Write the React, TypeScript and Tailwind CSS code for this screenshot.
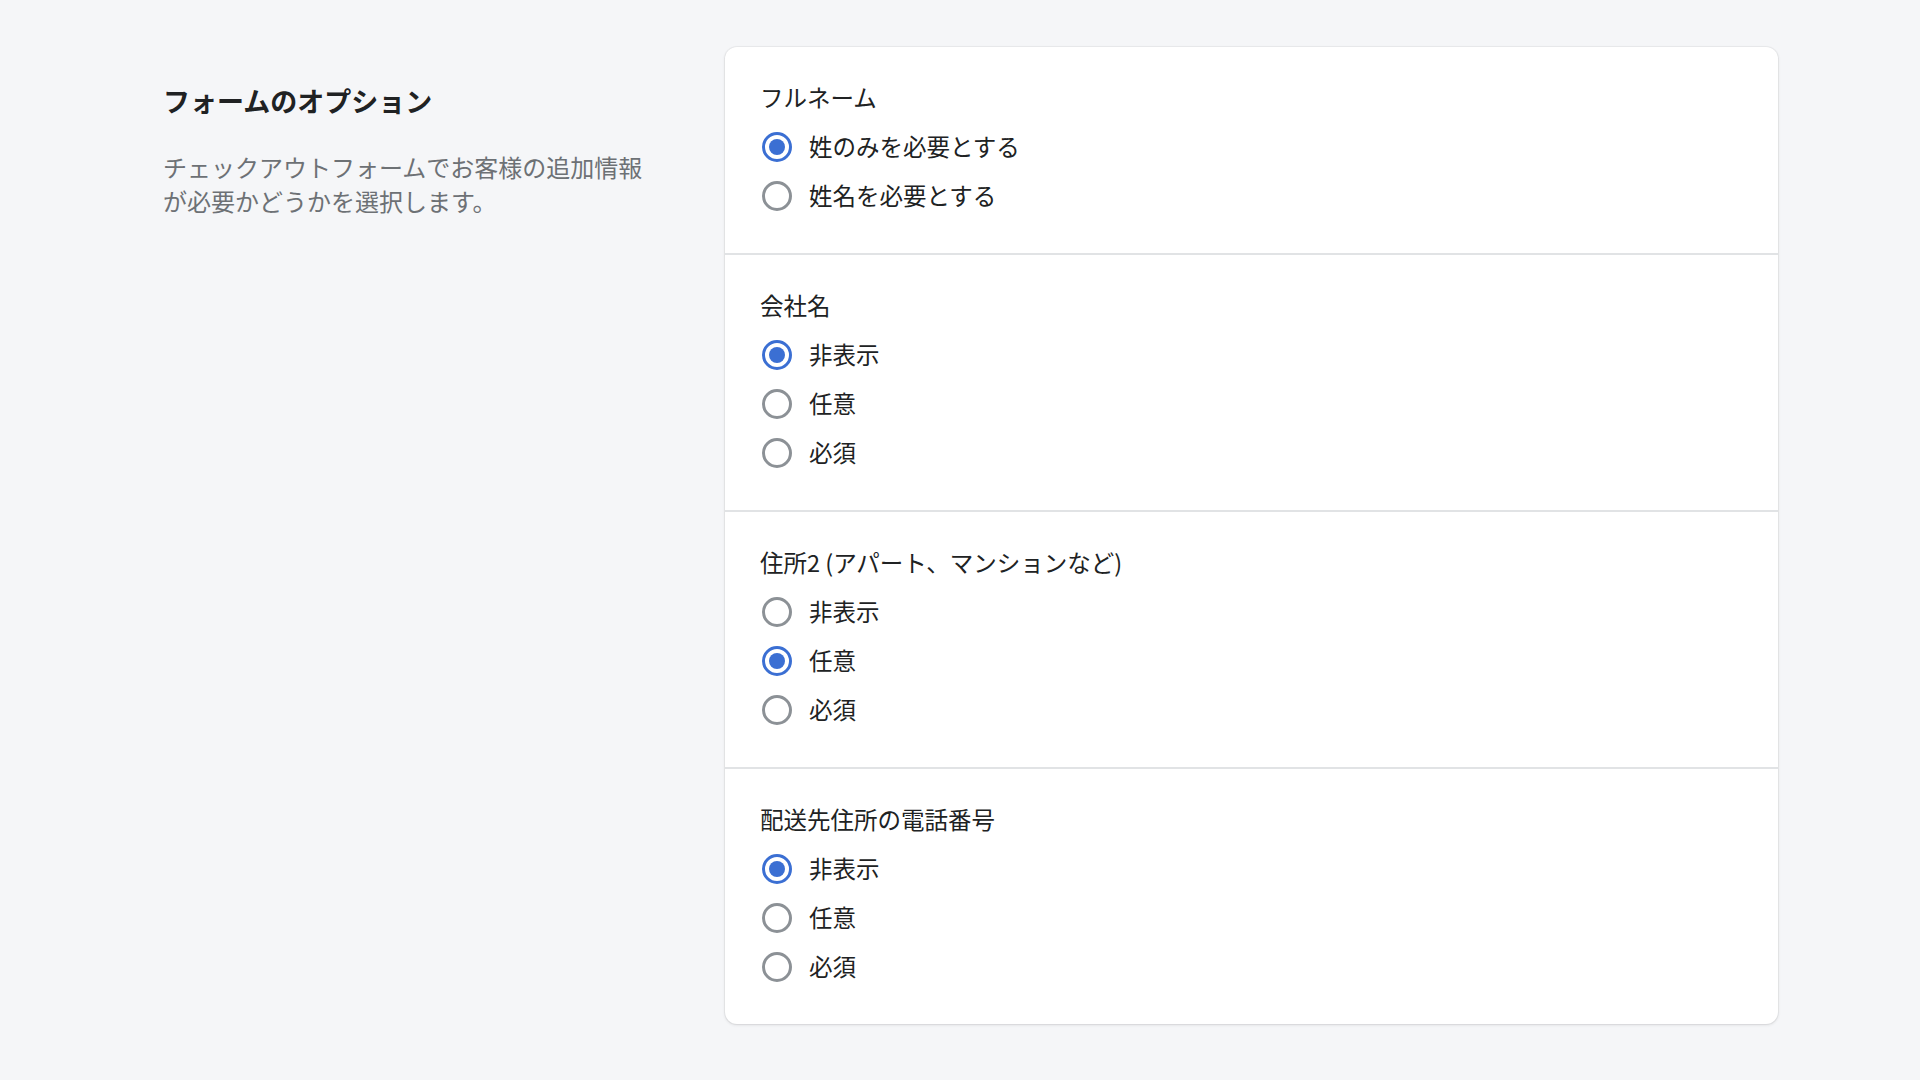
const SECTIONS: { label: string; options: string[]; selected: number }[] = [
  { label: 'フルネーム', options: ['姓のみを必要とする', '姓名を必要とする'], selected: 0 },
  { label: '会社名', options: ['非表示', '任意', '必須'], selected: 0 },
  { label: '住所2 (アパート、マンションなど)', options: ['非表示', '任意', '必須'], selected: 1 },
  { label: '配送先住所の電話番号', options: ['非表示', '任意', '必須'], selected: 0 },
];

function Radio({ checked }: { checked: boolean }) {
  return checked ? (
    <span className="flex h-[30px] w-[30px] items-center justify-center rounded-full border-[3px] border-[#3b6fd3]">
      <span className="h-[16px] w-[16px] rounded-full bg-[#3b6fd3]" />
    </span>
  ) : (
    <span className="h-[30px] w-[30px] rounded-full border-[3px] border-[#8c9196]" />
  );
}

export default function App() {
  return (
    <div
      className="min-h-screen bg-[#f5f6f8] text-[#202223]"
      style={{ fontFamily: '"Noto Sans CJK JP", "Noto Sans", sans-serif' }}
    >
      <div className="flex pt-[47px]">
        <div className="ml-[163px] w-[500px] pt-[34px]">
          <h2 className="text-[27px] font-bold leading-[40px]">フォームのオプション</h2>
          <p className="mt-[29px] w-[495px] text-[24px] leading-[34px] text-[#6d7175]">
            チェックアウトフォームでお客様の追加情報が必要かどうかを選択します。
          </p>
        </div>
        <div className="ml-[62px] w-[1053px] rounded-[12px] bg-white shadow-[0_0_0_1px_rgba(63,63,68,0.05),0_1px_3px_rgba(63,63,68,0.15)]">
          {SECTIONS.map((s, i) => (
            <div
              key={s.label}
              className={`px-[35px] pt-[26px] pb-[33px] ${i > 0 ? 'border-t-2 border-[#e1e3e5]' : ''}`}
            >
              <div className="flex h-[49px] items-center text-[23.5px]">{s.label}</div>
              {s.options.map((o, j) => (
                <div key={o} className="flex h-[49px] items-center gap-[17px] pl-[2px]">
                  <Radio checked={j === s.selected} />
                  <span className="text-[23.5px]">{o}</span>
                </div>
              ))}
            </div>
          ))}
        </div>
      </div>
    </div>
  );
}
